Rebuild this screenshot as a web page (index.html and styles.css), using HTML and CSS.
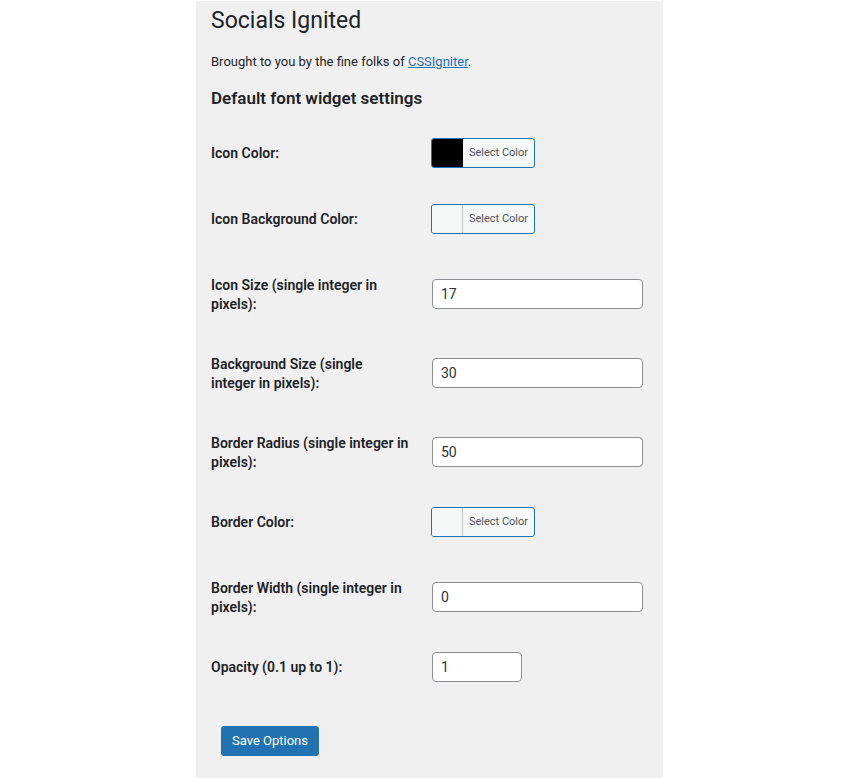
FILE: index.html
```html
<!DOCTYPE html>
<html>
<head>
<meta charset="utf-8">
<link rel="stylesheet" href="styles.css">
</head>
<body>
<div class="panel">
  <h1 class="title">Socials Ignited</h1>
  <p class="intro">Brought to you by the fine folks of <a href="#">CSSIgniter</a>.</p>
  <h2 class="section">Default font widget settings</h2>
  <div class="form">
    <div class="row">
      <div class="label">Icon Color:</div>
      <div class="field"><button class="color-btn"><span class="swatch swatch-black"></span><span class="color-text">Select Color</span></button></div>
    </div>
    <div class="row">
      <div class="label">Icon Background Color:</div>
      <div class="field"><button class="color-btn"><span class="swatch"></span><span class="color-text">Select Color</span></button></div>
    </div>
    <div class="row">
      <div class="label">Icon Size (single integer in pixels):</div>
      <div class="field"><input class="text" type="text" value="17"></div>
    </div>
    <div class="row">
      <div class="label">Background Size (single integer in pixels):</div>
      <div class="field"><input class="text" type="text" value="30"></div>
    </div>
    <div class="row">
      <div class="label">Border Radius (single integer in pixels):</div>
      <div class="field"><input class="text" type="text" value="50"></div>
    </div>
    <div class="row">
      <div class="label">Border Color:</div>
      <div class="field"><button class="color-btn"><span class="swatch"></span><span class="color-text">Select Color</span></button></div>
    </div>
    <div class="row">
      <div class="label">Border Width (single integer in pixels):</div>
      <div class="field"><input class="text" type="text" value="0"></div>
    </div>
    <div class="row">
      <div class="label">Opacity (0.1 up to 1):</div>
      <div class="field"><input class="text small" type="text" value="1"></div>
    </div>
  </div>
  <div class="submit"><button class="primary">Save Options</button></div>
</div>
</body>
</html>
```
FILE: styles.css
```css
html, body {
  margin: 0;
  padding: 0;
  background: #ffffff;
}
body {
  font-family: Roboto, "Liberation Sans", sans-serif;
  color: #1d2327;
  font-size: 13px;
}
.panel {
  width: 452px;
  margin: 1px 0 0 196px;
  padding: 0 0 22px 15px;
  background: #f0f0f1;
  box-sizing: content-box;
}
.title {
  margin: 0;
  padding: 5px 0 4px;
  font-size: 23px;
  font-weight: 400;
  line-height: 1.3;
}
.intro {
  margin: 12px 0 0;
  font-size: 13px;
  line-height: 1.5;
}
.intro a {
  color: #2271b1;
  text-decoration: underline;
}
.section {
  margin: 16px 0 0;
  font-size: 17px;
  font-weight: 600;
  line-height: 1.3;
}
.form {
  margin-top: 13.4px;
}
.row {
  display: grid;
  grid-template-columns: 221px 1fr;
  align-items: start;
}
.label {
  padding: 21px 22px 19px 0;
  font-size: 14px;
  font-weight: 600;
  line-height: 19.5px;
}
.field {
  align-self: center;
  padding: 15px 10px 15px 0;
}
.color-btn {
  display: flex;
  align-items: stretch;
  height: 30px;
  width: 104px;
  margin: 0 0 6px -1px;
  padding: 0;
  border: 1px solid #2271b1;
  border-radius: 3px;
  background: #f6f7f7;
  overflow: hidden;
  cursor: pointer;
  font-family: Roboto, "Liberation Sans", sans-serif;
}
.swatch {
  width: 30px;
  border-right: 1px solid #c3c4c7;
  background: #f6f7f7;
}
.swatch-black {
  background: #000000;
  border-right-color: #000000;
}
.color-text {
  flex: 1;
  display: flex;
  align-items: center;
  justify-content: center;
  font-size: 11px;
  color: #50575e;
}
.text {
  display: block;
  box-sizing: border-box;
  width: 211px;
  height: 30px;
  margin: 0;
  padding: 0 8px;
  border: 1px solid #8c8f94;
  border-radius: 4px;
  background: #ffffff;
  font-family: Roboto, "Liberation Sans", sans-serif;
  font-size: 14px;
  color: #2c3338;
}
.text.small {
  width: 90px;
}
.submit {
  padding: 29px 0 0 10px;
}
.primary {
  height: 30px;
  padding: 0 10px;
  border: 1px solid #2271b1;
  border-radius: 3px;
  background: #2271b1;
  color: #ffffff;
  font-family: Roboto, "Liberation Sans", sans-serif;
  font-size: 13px;
  cursor: pointer;
}
```
